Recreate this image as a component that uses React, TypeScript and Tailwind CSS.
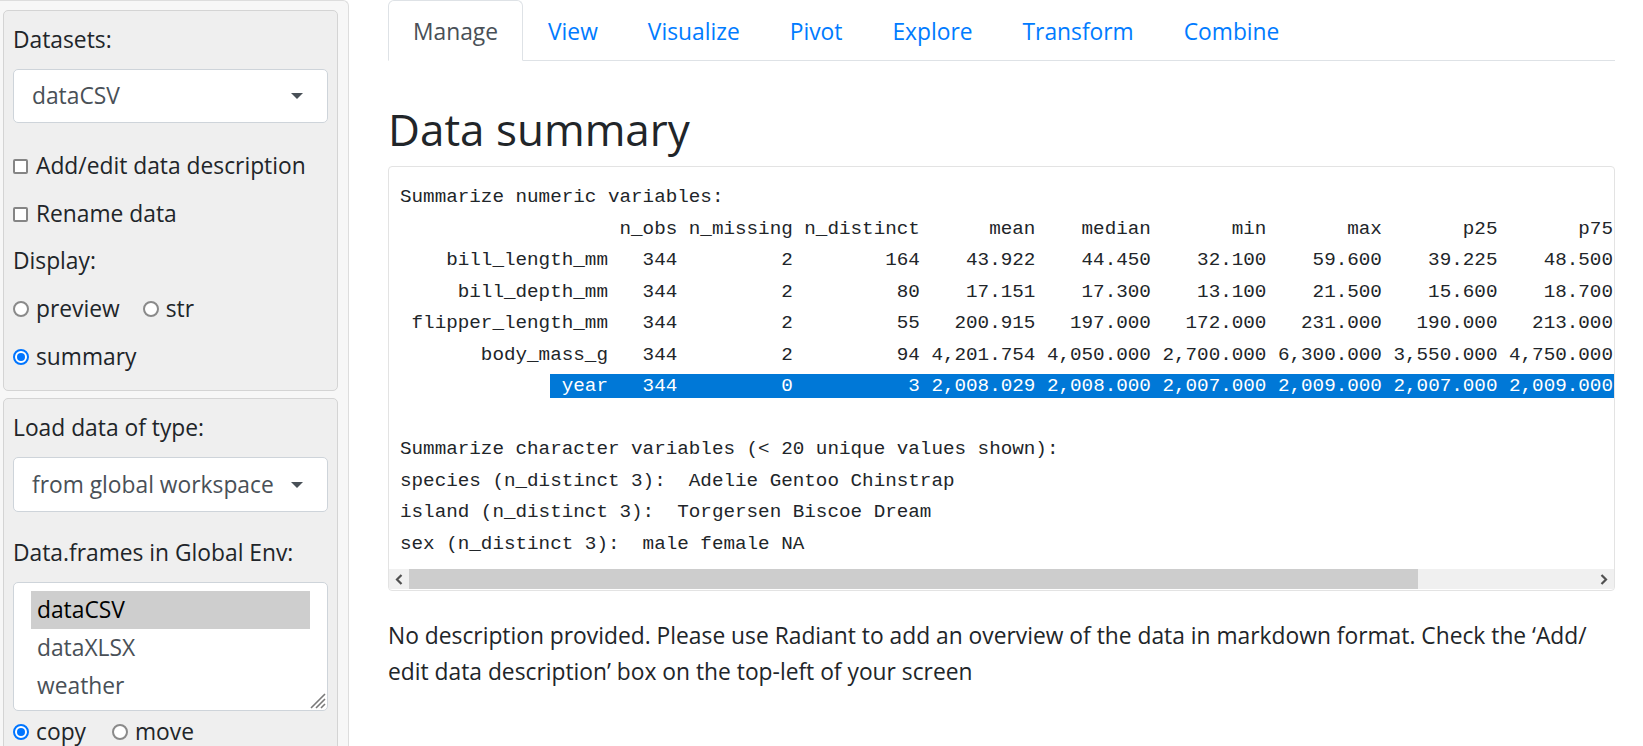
import React from "react";

const rowNames = ["bill_length_mm", "bill_depth_mm", "flipper_length_mm", "body_mass_g", "year"];
const cols: [string, string[]][] = [
  ["n_obs", ["344", "344", "344", "344", "344"]],
  ["n_missing", ["2", "2", "2", "2", "0"]],
  ["n_distinct", ["164", "80", "55", "94", "3"]],
  ["mean", ["43.922", "17.151", "200.915", "4,201.754", "2,008.029"]],
  ["median", ["44.450", "17.300", "197.000", "4,050.000", "2,008.000"]],
  ["min", ["32.100", "13.100", "172.000", "2,700.000", "2,007.000"]],
  ["max", ["59.600", "21.500", "231.000", "6,300.000", "2,009.000"]],
  ["p25", ["39.225", "15.600", "190.000", "3,550.000", "2,007.000"]],
  ["p75", ["48.500", "18.700", "213.000", "4,750.000", "2,009.000"]],
  ["sd", ["5.460", "1.975", "14.062", "801.955", "0.818"]],
];

function buildLine(name: string, values: string[]): string {
  let s = name.padStart(18, " ");
  cols.forEach(([h, v], i) => {
    const w = Math.max(h.length, ...v.map((x) => x.length));
    s += " " + values[i].padStart(w, " ");
  });
  return s;
}

const headerLine = buildLine("", cols.map(([h]) => h));
const dataLines = rowNames.map((n, r) => buildLine(n, cols.map(([, v]) => v[r])));

function Caret() {
  return (
    <svg width="12" height="6" viewBox="0 0 12 6" className="shrink-0">
      <path d="M0 0 L12 0 L6 6 Z" fill="#495057" />
    </svg>
  );
}

function Select({ label, h }: { label: string; h: string }) {
  return (
    <div
      className={`${h} bg-white border border-[#ced4da] rounded-[5px] flex items-center justify-between pl-[18px] pr-[24px] text-[#495057]`}
    >
      <span>{label}</span>
      <Caret />
    </div>
  );
}

function Checkbox({ label }: { label: string }) {
  return (
    <div className="h-[36px] flex items-center">
      <span className="w-[15px] h-[15px] border-2 border-[#858585] rounded-[2px] bg-white shrink-0" />
      <span className="ml-[8px]">{label}</span>
    </div>
  );
}

function Radio({ label, checked }: { label: string; checked?: boolean }) {
  return (
    <span className="flex items-center">
      {checked ? (
        <span className="w-[16px] h-[16px] rounded-full border-2 border-[#0075ff] bg-white flex items-center justify-center shrink-0">
          <span className="w-[8px] h-[8px] rounded-full bg-[#0075ff]" />
        </span>
      ) : (
        <span className="w-[16px] h-[16px] rounded-full border-2 border-[#8a8a8a] bg-white shrink-0" />
      )}
      <span className="ml-[7px]">{label}</span>
    </span>
  );
}

function Sidebar() {
  return (
    <div className="w-[349px] shrink-0 h-[746px] bg-[#f7f7f7] border-t border-r border-[#dddddd] rounded-tr-[6px] pl-[3px] pr-[10px] pt-[9px] overflow-hidden">
      <div className="border border-[#d4d4d4] rounded-[5px] bg-[#efefef] px-[9px] pt-[11px] pb-[15px]">
        <div className="h-[36px]">Datasets:</div>
        <div className="mt-[11px]">
          <Select label="dataCSV" h="h-[54px]" />
        </div>
        <div className="mt-[25px]">
          <Checkbox label="Add/edit data description" />
        </div>
        <div className="mt-[12px]">
          <Checkbox label="Rename data" />
        </div>
        <div className="mt-[11px] h-[36px]">Display:</div>
        <div className="mt-[12px] h-[36px] flex items-center gap-[23px]">
          <Radio label="preview" />
          <Radio label="str" />
        </div>
        <div className="mt-[12px] h-[36px] flex items-center">
          <Radio label="summary" checked />
        </div>
      </div>
      <div className="mt-[7px] border border-[#d4d4d4] rounded-[5px] bg-[#efefef] px-[9px] pt-[11px] pb-[16px]">
        <div className="h-[36px]">Load data of type:</div>
        <div className="mt-[11px]">
          <Select label="from global workspace" h="h-[55px]" />
        </div>
        <div className="mt-[23px] h-[36px]">Data.frames in Global Env:</div>
        <div className="mt-[11px] relative h-[129px] bg-white border border-[#ced4da] rounded-[5px] pt-[8px] px-[17px]">
          <div className="h-[38px] leading-[38px] pl-[6px] bg-[#cecece] text-black">dataCSV</div>
          <div className="h-[38px] leading-[38px] pl-[6px] text-[#495057]">dataXLSX</div>
          <div className="h-[38px] leading-[38px] pl-[6px] text-[#495057]">weather</div>
          <svg width="18" height="18" viewBox="0 0 18 18" className="absolute right-[1px] bottom-[1px]">
            <path d="M17 3 L3 17 M17 8 L8 17 M17 13 L13 17" stroke="#7a7a7a" strokeWidth="1.6" />
          </svg>
        </div>
        <div className="mt-[3px] h-[36px] flex items-center gap-[26px]">
          <Radio label="copy" checked />
          <Radio label="move" />
        </div>
      </div>
    </div>
  );
}

const tabs = ["Manage", "View", "Visualize", "Pivot", "Explore", "Transform", "Combine"];

function Chevron({ dir }: { dir: "l" | "r" }) {
  return (
    <svg width="8" height="11" viewBox="0 0 8 11">
      <path
        d={dir === "l" ? "M6.5 1 L2 5.5 L6.5 10" : "M1.5 1 L6 5.5 L1.5 10"}
        stroke="#505050"
        strokeWidth="2.2"
        fill="none"
      />
    </svg>
  );
}

function Main() {
  const yearLine = dataLines[4];
  return (
    <div className="ml-[39px] w-[1227px] shrink-0">
      <ul className="flex h-[61px] border-b border-[#dee2e6]">
        {tabs.map((t, i) => (
          <li
            key={t}
            className={
              i === 0
                ? "h-[61px] -mb-px px-[24px] pt-[13px] pb-[10px] border border-[#dee2e6] border-b-white rounded-t-[6px] bg-white text-[#495057] leading-[36px]"
                : "h-[61px] -mb-px px-[24px] pt-[13px] pb-[10px] border border-transparent rounded-t-[6px] text-[#007bff] leading-[36px]"
            }
          >
            {t}
          </li>
        ))}
      </ul>
      <h3 className="mt-[42px] mb-[11px] text-[44px] leading-[52px] font-normal text-[#212529]">Data summary</h3>
      <div className="h-[425px] border border-[#e3e3e3] rounded-[4px] bg-white flex flex-col overflow-hidden">
        <div className="h-[402px] pl-[11px] pt-[15px] overflow-hidden font-['Liberation_Mono',monospace] text-[19.25px] leading-[31.5px] whitespace-pre text-[#212529]">
          <div className="h-[31.5px]">Summarize numeric variables:</div>
          <div className="h-[31.5px]">{headerLine}</div>
          {dataLines.slice(0, 4).map((l) => (
            <div key={l} className="h-[31.5px]">
              {l}
            </div>
          ))}
          <div className="h-[31.5px]">
            {yearLine.slice(0, 13)}
            <span className="bg-[#0078d7] text-white py-[1px]">{yearLine.slice(13)}</span>
          </div>
          <div className="h-[31.5px]"> </div>
          <div className="h-[31.5px]">Summarize character variables (&lt; 20 unique values shown):</div>
          <div className="h-[31.5px]">species (n_distinct 3):  Adelie Gentoo Chinstrap</div>
          <div className="h-[31.5px]">island (n_distinct 3):  Torgersen Biscoe Dream</div>
          <div className="h-[31.5px]">sex (n_distinct 3):  male female NA</div>
        </div>
        <div className="h-[20px] flex bg-[#f0f0f0] shrink-0">
          <div className="w-[20px] flex items-center justify-center">
            <Chevron dir="l" />
          </div>
          <div className="w-[1009px] bg-[#cdcdcd]" />
          <div className="flex-1" />
          <div className="w-[20px] flex items-center justify-center">
            <Chevron dir="r" />
          </div>
        </div>
      </div>
      <p className="mt-[27px] text-[#212529]">
        No description provided. Please use Radiant to add an overview of the data in markdown format. Check the ‘Add/
        <br />
        edit data description’ box on the top-left of your screen
      </p>
    </div>
  );
}

export default function App() {
  return (
    <div className="flex w-[1643px] h-[746px] overflow-hidden bg-white font-['Open_Sans',sans-serif] text-[22.8px] leading-[36px] text-[#212529]">
      <Sidebar />
      <Main />
    </div>
  );
}
